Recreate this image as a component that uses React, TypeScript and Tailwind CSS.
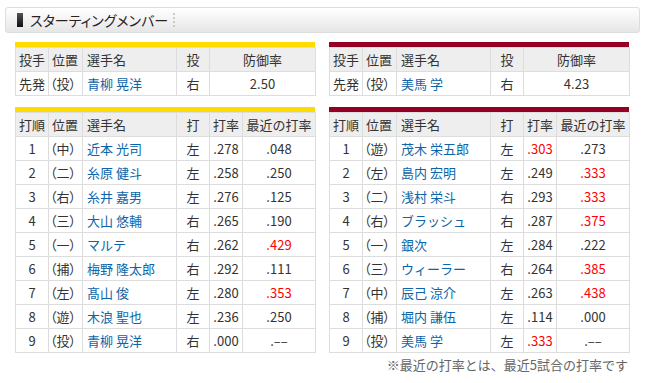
import React from "react";

type Row = { no: string; pos: string; name: string; hand: string; avg: string; avgRed?: boolean; recent: string; recentRed?: boolean };

const tigers: Row[] = [
  { no: "1", pos: "（中）", name: "近本 光司", hand: "左", avg: ".278", recent: ".048" },
  { no: "2", pos: "（二）", name: "糸原 健斗", hand: "左", avg: ".258", recent: ".250" },
  { no: "3", pos: "（右）", name: "糸井 嘉男", hand: "左", avg: ".276", recent: ".125" },
  { no: "4", pos: "（三）", name: "大山 悠輔", hand: "右", avg: ".265", recent: ".190" },
  { no: "5", pos: "（一）", name: "マルテ", hand: "右", avg: ".262", recent: ".429", recentRed: true },
  { no: "6", pos: "（捕）", name: "梅野 隆太郎", hand: "右", avg: ".292", recent: ".111" },
  { no: "7", pos: "（左）", name: "髙山 俊", hand: "左", avg: ".280", recent: ".353", recentRed: true },
  { no: "8", pos: "（遊）", name: "木浪 聖也", hand: "左", avg: ".236", recent: ".250" },
  { no: "9", pos: "（投）", name: "青柳 晃洋", hand: "右", avg: ".000", recent: ".––" },
];

const eagles: Row[] = [
  { no: "1", pos: "（遊）", name: "茂木 栄五郎", hand: "左", avg: ".303", avgRed: true, recent: ".273" },
  { no: "2", pos: "（左）", name: "島内 宏明", hand: "左", avg: ".249", recent: ".333", recentRed: true },
  { no: "3", pos: "（二）", name: "浅村 栄斗", hand: "右", avg: ".293", recent: ".333", recentRed: true },
  { no: "4", pos: "（右）", name: "ブラッシュ", hand: "右", avg: ".287", recent: ".375", recentRed: true },
  { no: "5", pos: "（一）", name: "銀次", hand: "左", avg: ".284", recent: ".222" },
  { no: "6", pos: "（三）", name: "ウィーラー", hand: "右", avg: ".264", recent: ".385", recentRed: true },
  { no: "7", pos: "（中）", name: "辰己 涼介", hand: "左", avg: ".263", recent: ".438", recentRed: true },
  { no: "8", pos: "（捕）", name: "堀内 謙伍", hand: "左", avg: ".114", recent: ".000" },
  { no: "9", pos: "（投）", name: "美馬 学", hand: "左", avg: ".333", avgRed: true, recent: ".––" },
];

const cell = "border border-[#dddddd] h-[24px] p-0 align-middle leading-none";
const th = cell + " bg-[#eeeeee] font-normal";

function Team({ bar, pitcher, era, rows }: { bar: string; pitcher: string; era: string; rows: Row[] }) {
  return (
    <div className="w-[300px] flex flex-col">
      <div className={"h-[5px] w-[300px] " + bar} />
      <table className="w-[300px] table-fixed border-collapse">
        <colgroup>
          <col className="w-[33px]" />
          <col className="w-[34px]" />
          <col className="w-[94px]" />
          <col className="w-[33px]" />
          <col className="w-[106px]" />
        </colgroup>
        <thead>
          <tr>
            <th className={th + " text-left pl-[3px]"}>投手</th>
            <th className={th + " text-left pl-[3px]"}>位置</th>
            <th className={th + " text-left pl-[4px]"}>選手名</th>
            <th className={th + " text-center"}>投</th>
            <th className={th + " text-center"}>防御率</th>
          </tr>
        </thead>
        <tbody>
          <tr>
            <td className={cell + " text-left pl-[3px]"}>先発</td>
            <td className={cell + " text-left pl-[1px] [font-feature-settings:'palt']"}>（投）</td>
            <td className={cell + " text-left pl-[4px] text-[#0d65a8]"}>{pitcher}</td>
            <td className={cell + " text-center"}>右</td>
            <td className={cell + " text-center"}>{era}</td>
          </tr>
        </tbody>
      </table>
      <div className={"h-[5px] w-[300px] mt-[11px] " + bar} />
      <table className="w-[300px] table-fixed border-collapse">
        <colgroup>
          <col className="w-[33px]" />
          <col className="w-[34px]" />
          <col className="w-[94px]" />
          <col className="w-[33px]" />
          <col className="w-[33px]" />
          <col className="w-[73px]" />
        </colgroup>
        <thead>
          <tr>
            <th className={th + " text-left pl-[3px]"}>打順</th>
            <th className={th + " text-left pl-[3px]"}>位置</th>
            <th className={th + " text-left pl-[4px]"}>選手名</th>
            <th className={th + " text-center"}>打</th>
            <th className={th + " text-center"}>打率</th>
            <th className={th + " text-center whitespace-nowrap"}>最近の打率</th>
          </tr>
        </thead>
        <tbody>
          {rows.map((r) => (
            <tr key={r.no}>
              <td className={cell + " text-center"}>{r.no}</td>
              <td className={cell + " text-left pl-[1px] whitespace-nowrap [font-feature-settings:'palt']"}>{r.pos}</td>
              <td className={cell + " text-left pl-[4px] text-[#0d65a8] whitespace-nowrap"}>{r.name}</td>
              <td className={cell + " text-center"}>{r.hand}</td>
              <td className={cell + " text-center " + (r.avgRed ? "text-[#ff0000]" : "")}>{r.avg}</td>
              <td className={cell + " text-center " + (r.recentRed ? "text-[#ff0000]" : "")}>{r.recent}</td>
            </tr>
          ))}
        </tbody>
      </table>
    </div>
  );
}

export default function App() {
  return (
    <div className="w-[645px] h-[383px] bg-white pt-[7px] px-[5px] text-[13px] text-[#333333] font-['Noto_Sans_CJK_JP','Noto_Sans',sans-serif]">
      <div className="h-[26px] border border-[#dddddd] rounded-[3px] bg-gradient-to-b from-white via-[#f3f3f3] to-[#e6e6e6] flex items-center pl-[11px]">
        <div className="w-[6px] h-[14px] bg-gradient-to-b from-[#555555] to-[#111111]" />
        <div className="ml-[7px] text-[14px] leading-none text-[#2a2222] [font-feature-settings:'palt']">スターティングメンバー</div>
        <div className="ml-[5px] h-[14px] border-l-2 border-dotted border-[#cccccc]" />
      </div>
      <div className="px-[10px] mt-[9px]">
        <div className="flex gap-[14px]">
          <Team bar="bg-[#ffdc00]" pitcher="青柳 晃洋" era="2.50" rows={tigers} />
          <Team bar="bg-[#930024]" pitcher="美馬 学" era="4.23" rows={eagles} />
        </div>
        <div className="mt-[5px] pr-[2px] text-right text-[#666666] leading-none">※最近の打率とは、最近5試合の打率です</div>
      </div>
    </div>
  );
}
